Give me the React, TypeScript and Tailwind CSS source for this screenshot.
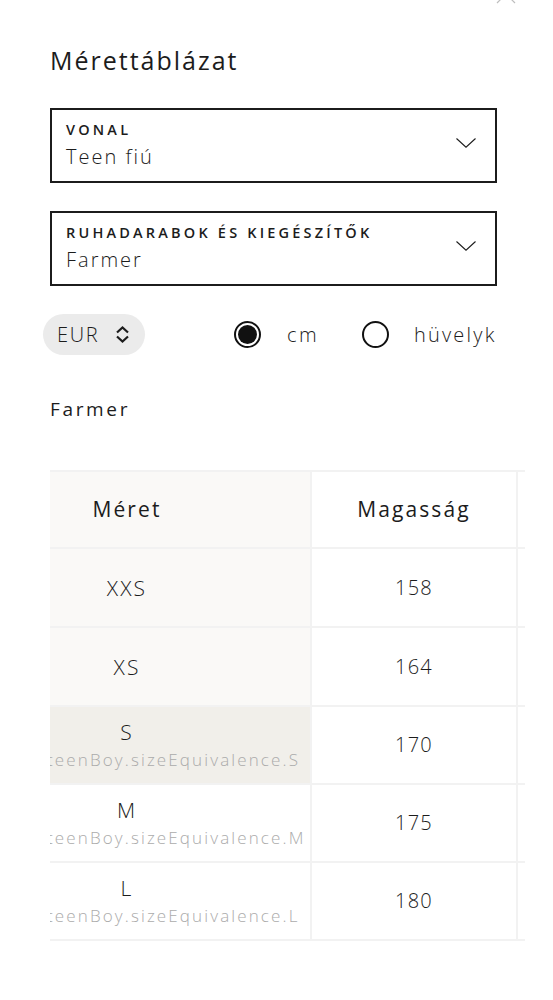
const font = { fontFamily: "'Open Sans', 'Noto Sans', sans-serif" }

type Row = {
  size: string
  equiv?: string
  height: string
  bg: string
  h: string
}

const rows: Row[] = [
  { size: "XXS", height: "158", bg: "bg-[#faf9f7]", h: "h-[77px]" },
  { size: "XS", height: "164", bg: "bg-[#faf9f7]", h: "h-[77px]" },
  { size: "S", equiv: "teenBoy.sizeEquivalence.S", height: "170", bg: "bg-[#f1efea]", h: "h-[76px]" },
  { size: "M", equiv: "teenBoy.sizeEquivalence.M", height: "175", bg: "bg-white", h: "h-[76px]" },
  { size: "L", equiv: "teenBoy.sizeEquivalence.L", height: "180", bg: "bg-white", h: "h-[76px]" },
]

function SelectBox({ label, value }: { label: string; value: string }) {
  return (
    <div className="flex h-[75px] w-[447px] items-center border-2 border-[#1c1c1c] pl-[14px] pr-[19px]">
      <div className="flex flex-1 flex-col">
        <span className="text-[14.5px] leading-[18px] font-semibold tracking-[0.22em] text-[#1c1c1c]">
          {label}
        </span>
        <span className="mt-[5px] text-[20px] leading-[26px] font-light tracking-[0.1em] text-[#1c1c1c]">
          {value}
        </span>
      </div>
      <svg width="20" height="10" viewBox="0 0 20 10" className="-mt-[6px]">
        <path d="M0.5 0.5 L10 9.2 L19.5 0.5" fill="none" stroke="#1c1c1c" strokeWidth="1.1" />
      </svg>
    </div>
  )
}

function Radio({ checked }: { checked?: boolean }) {
  return (
    <span className="flex h-[27px] w-[27px] items-center justify-center rounded-full border-2 border-[#111]">
      {checked && <span className="h-[19px] w-[19px] rounded-full bg-[#111]" />}
    </span>
  )
}

export default function App() {
  return (
    <div className="min-h-[1000px] bg-white text-[#1c1c1c]" style={font}>
      {/* close icon, mostly scrolled off the top */}
      <div className="relative h-0">
        <svg width="22" height="22" viewBox="0 0 22 22" className="absolute right-[36px] -top-[17px] opacity-25">
          <path d="M2 2 L20 20 M20 2 L2 20" stroke="#000" strokeWidth="1.2" />
        </svg>
      </div>

      <div className="pl-[50px] pt-[44px]">
        <h1 className="text-[25px] leading-[32px] font-medium tracking-[0.08em]">Mérettáblázat</h1>

        <div className="mt-[32px] flex flex-col gap-[28px]">
          <SelectBox label="VONAL" value="Teen fiú" />
          <SelectBox label="RUHADARABOK ÉS KIEGÉSZÍTŐK" value="Farmer" />
        </div>
      </div>

      <div className="ml-[43px] mt-[28px] flex items-center">
        <div className="flex h-[41px] w-[102px] items-center rounded-full bg-[#ebebeb] pl-[14px]">
          <span className="text-[20px] leading-[24px] font-light tracking-[0.08em]">EUR</span>
          <svg width="15" height="17" viewBox="0 0 15 17" className="ml-[16px]">
            <path d="M2 6.5 L7.5 1.5 L13 6.5 M2 10.5 L7.5 15.5 L13 10.5" fill="none" stroke="#1c1c1c" strokeWidth="2.2" />
          </svg>
        </div>
        <div className="ml-[89px] flex items-center">
          <Radio checked />
          <span className="ml-[26px] text-[20px] leading-[24px] font-light tracking-[0.12em]">cm</span>
          <span className="ml-[43px]">
            <Radio />
          </span>
          <span className="ml-[25px] text-[20px] leading-[24px] font-light tracking-[0.11em]">hüvelyk</span>
        </div>
      </div>

      <div className="pl-[50px] pt-[42px]">
        <h2 className="text-[19px] leading-[24px] font-medium tracking-[0.14em]">Farmer</h2>
      </div>

      <div className="ml-[50px] mt-[49px] w-[475px] overflow-hidden border-t-2 border-[#f2f2f2]">
        <div className="flex w-[560px] border-b-2 border-[#f2f2f2]">
          <div className="flex h-[75px] w-[262px] shrink-0 items-center border-r-2 border-[#f2f2f2] bg-[#faf9f7]">
            <span className="w-[154px] text-center text-[21px] font-medium tracking-[0.1em]">Méret</span>
          </div>
          <div className="flex h-[75px] w-[206px] shrink-0 items-center justify-center border-r-2 border-[#f2f2f2]">
            <span className="text-[21px] font-medium tracking-[0.1em]">Magasság</span>
          </div>
          <div className="h-[75px] w-[92px] shrink-0" />
        </div>

        {rows.map((r) => (
          <div key={r.size} className="flex w-[560px] border-b-2 border-[#f2f2f2]">
            <div
              className={`flex ${r.h} w-[262px] shrink-0 flex-col justify-center overflow-hidden border-r-2 border-[#f2f2f2] ${r.bg}`}
            >
              <span className="w-[154px] text-center text-[21px] leading-[26px] font-light tracking-[0.1em]">
                {r.size}
              </span>
              {r.equiv && (
                <span className="-ml-[3px] mt-[4px] whitespace-nowrap text-[17px] leading-[22px] font-light tracking-[0.125em] text-[#ababab]">
                  {r.equiv}
                </span>
              )}
            </div>
            <div className={`flex ${r.h} w-[206px] shrink-0 items-center justify-center border-r-2 border-[#f2f2f2]`}>
              <span className="text-[20px] font-light tracking-[0.06em]">{r.height}</span>
            </div>
            <div className={`${r.h} w-[92px] shrink-0`} />
          </div>
        ))}
      </div>
    </div>
  )
}
